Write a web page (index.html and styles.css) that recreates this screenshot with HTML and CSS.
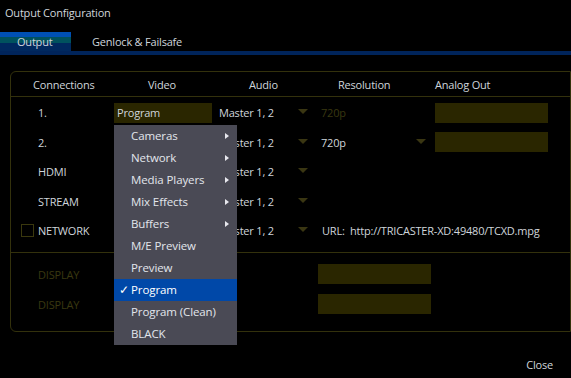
FILE: index.html
```html
<!DOCTYPE html>
<html lang="en">
<head>
    <meta charset="UTF-8">
    <title>Output Configuration</title>
    <link rel="stylesheet" href="styles.css">
</head>
<body>
    <div class="title">Output Configuration</div>
    <div class="tabs">
        <div class="tab active">Output</div>
        <div class="tab">Genlock &amp; Failsafe</div>
    </div>

    <div class="panel">
        <div class="grid head">
            <div class="h-conn">Connections</div>
            <div class="h-video">Video</div>
            <div class="h-audio">Audio</div>
            <div class="h-res">Resolution</div>
            <div class="h-analog">Analog Out</div>
        </div>

        <div class="rows">
            <div class="grid row">
                <div class="conn">1.</div>
                <div class="video">
                    <div class="field">Program
                        <ul class="menu">
                            <li class="sub">Cameras</li>
                            <li class="sub">Network</li>
                            <li class="sub">Media Players</li>
                            <li class="sub">Mix Effects</li>
                            <li class="sub">Buffers</li>
                            <li>M/E Preview</li>
                            <li>Preview</li>
                            <li class="selected"><span class="check">&#10003;</span>Program</li>
                            <li>Program (Clean)</li>
                            <li>BLACK</li>
                        </ul>
                    </div>
                </div>
                <div class="select">Master 1, 2<span class="arrow"></span></div>
                <div class="select res dim">720p</div>
                <div><div class="box analog"></div></div>
            </div>
            <div class="grid row">
                <div class="conn">2.</div>
                <div></div>
                <div class="select">Master 1, 2<span class="arrow"></span></div>
                <div class="select res">720p<span class="arrow"></span></div>
                <div><div class="box analog"></div></div>
            </div>
            <div class="grid row">
                <div class="conn">HDMI</div>
                <div></div>
                <div class="select">Master 1, 2<span class="arrow"></span></div>
                <div></div>
                <div></div>
            </div>
            <div class="grid row">
                <div class="conn">STREAM</div>
                <div></div>
                <div class="select">Master 1, 2<span class="arrow"></span></div>
                <div></div>
                <div></div>
            </div>
            <div class="grid row">
                <div class="conn checked"><span class="checkbox"></span>NETWORK</div>
                <div></div>
                <div class="select">Master 1, 2<span class="arrow"></span></div>
                <div class="url">URL:&nbsp; http://TRICASTER-XD:49480/TCXD.mpg</div>
            </div>
        </div>

        <div class="rows lower">
            <div class="grid row">
                <div class="conn dim">DISPLAY</div>
                <div></div>
                <div></div>
                <div><div class="box display"></div></div>
                <div></div>
            </div>
            <div class="grid row">
                <div class="conn dim">DISPLAY</div>
                <div></div>
                <div></div>
                <div><div class="box display"></div></div>
                <div></div>
            </div>
        </div>
    </div>

    <div class="footer">
        <span class="close">Close</span>
    </div>
</body>
</html>
```

FILE: styles.css
```css
body {
    font-family: 'Open Sans', 'Noto Sans', sans-serif;
    font-size: 11px;
    letter-spacing: -0.2px;
    margin: 0;
    background-color: #000;
    color: #cfd5db;
}
.title {
    margin: 5px 0 0 5px;
    line-height: 16px;
}
.tabs {
    display: flex;
    margin-top: 11px;
    height: 19px;
    border-bottom: 4px solid #00245a;
}
.tab {
    line-height: 19px;
    padding-left: 21px;
}
.tab.active {
    width: 71px;
    box-sizing: border-box;
    padding-left: 17px;
    background: linear-gradient(#0050b4 0, #0050b4 5px, #00525e 5px, #00525e 11px, #00285e 11px);
}
.panel {
    margin: 16px 0 0 10px;
    width: 561px;
    box-sizing: border-box;
    border: 1px solid #33310c;
    border-radius: 6px 0 0 6px;
}
.grid {
    display: grid;
    grid-template-columns: 103px 105px 98px 118px 113px;
    align-items: center;
}
.head {
    height: 24px;
    border-bottom: 1px solid #33310c;
}
.h-conn { padding-left: 22px; }
.h-video { padding-left: 34px; }
.h-audio { padding-left: 30px; }
.h-res { padding-left: 21px; }
.rows {
    padding: 1px 0 6.5px;
}
.lower {
    border-top: 1px solid #33310c;
    padding: 6px 0 12px;
}
.row {
    height: 29.5px;
}
.lower .row {
    height: 30px;
}
.conn {
    padding-left: 27px;
    display: flex;
    align-items: center;
}
.conn.checked {
    padding-left: 10px;
}
.checkbox {
    width: 11px;
    height: 11px;
    border: 1px solid #3a380e;
    margin-right: 4px;
}
.dim {
    color: #3a3810;
}
.video {
    position: relative;
}
.field {
    position: relative;
    width: 98px;
    height: 20px;
    line-height: 20px;
    box-sizing: border-box;
    padding-left: 3px;
    background: #2a2600;
}
.select {
    display: flex;
    justify-content: space-between;
    align-items: center;
    padding-right: 9px;
}
.select.res {
    padding-left: 4px;
}
.arrow {
    width: 0;
    height: 0;
    border-left: 5px solid transparent;
    border-right: 5px solid transparent;
    border-top: 5px solid #3a3612;
    margin-top: -2px;
}
.box {
    height: 20px;
    background: #2a2600;
}
.analog {
    width: 113px;
}
.display {
    width: 113px;
    margin-left: 1px;
}
.url {
    grid-column: 4 / 6;
    padding-left: 5px;
}
.menu {
    position: absolute;
    top: 22px;
    left: 0;
    width: 123px;
    margin: 0;
    padding: 0;
    list-style: none;
    background: #4a4a55;
    color: #e2e6ec;
    font-size: 11.5px;
    letter-spacing: -0.1px;
    z-index: 2;
}
.menu li {
    position: relative;
    height: 22px;
    line-height: 22px;
    padding-left: 17px;
}
.menu li.sub::after {
    content: '';
    position: absolute;
    right: 8px;
    top: 8px;
    border-top: 3px solid transparent;
    border-bottom: 3px solid transparent;
    border-left: 4px solid #e8e8ee;
}
.menu li.selected {
    background: #0048a8;
    color: #fff;
}
.check {
    display: inline-block;
    width: 12px;
    margin-left: -12px;
}
.footer {
    display: flex;
    justify-content: flex-end;
    padding: 25px 18px 0 0;
    line-height: 16px;
}
```
